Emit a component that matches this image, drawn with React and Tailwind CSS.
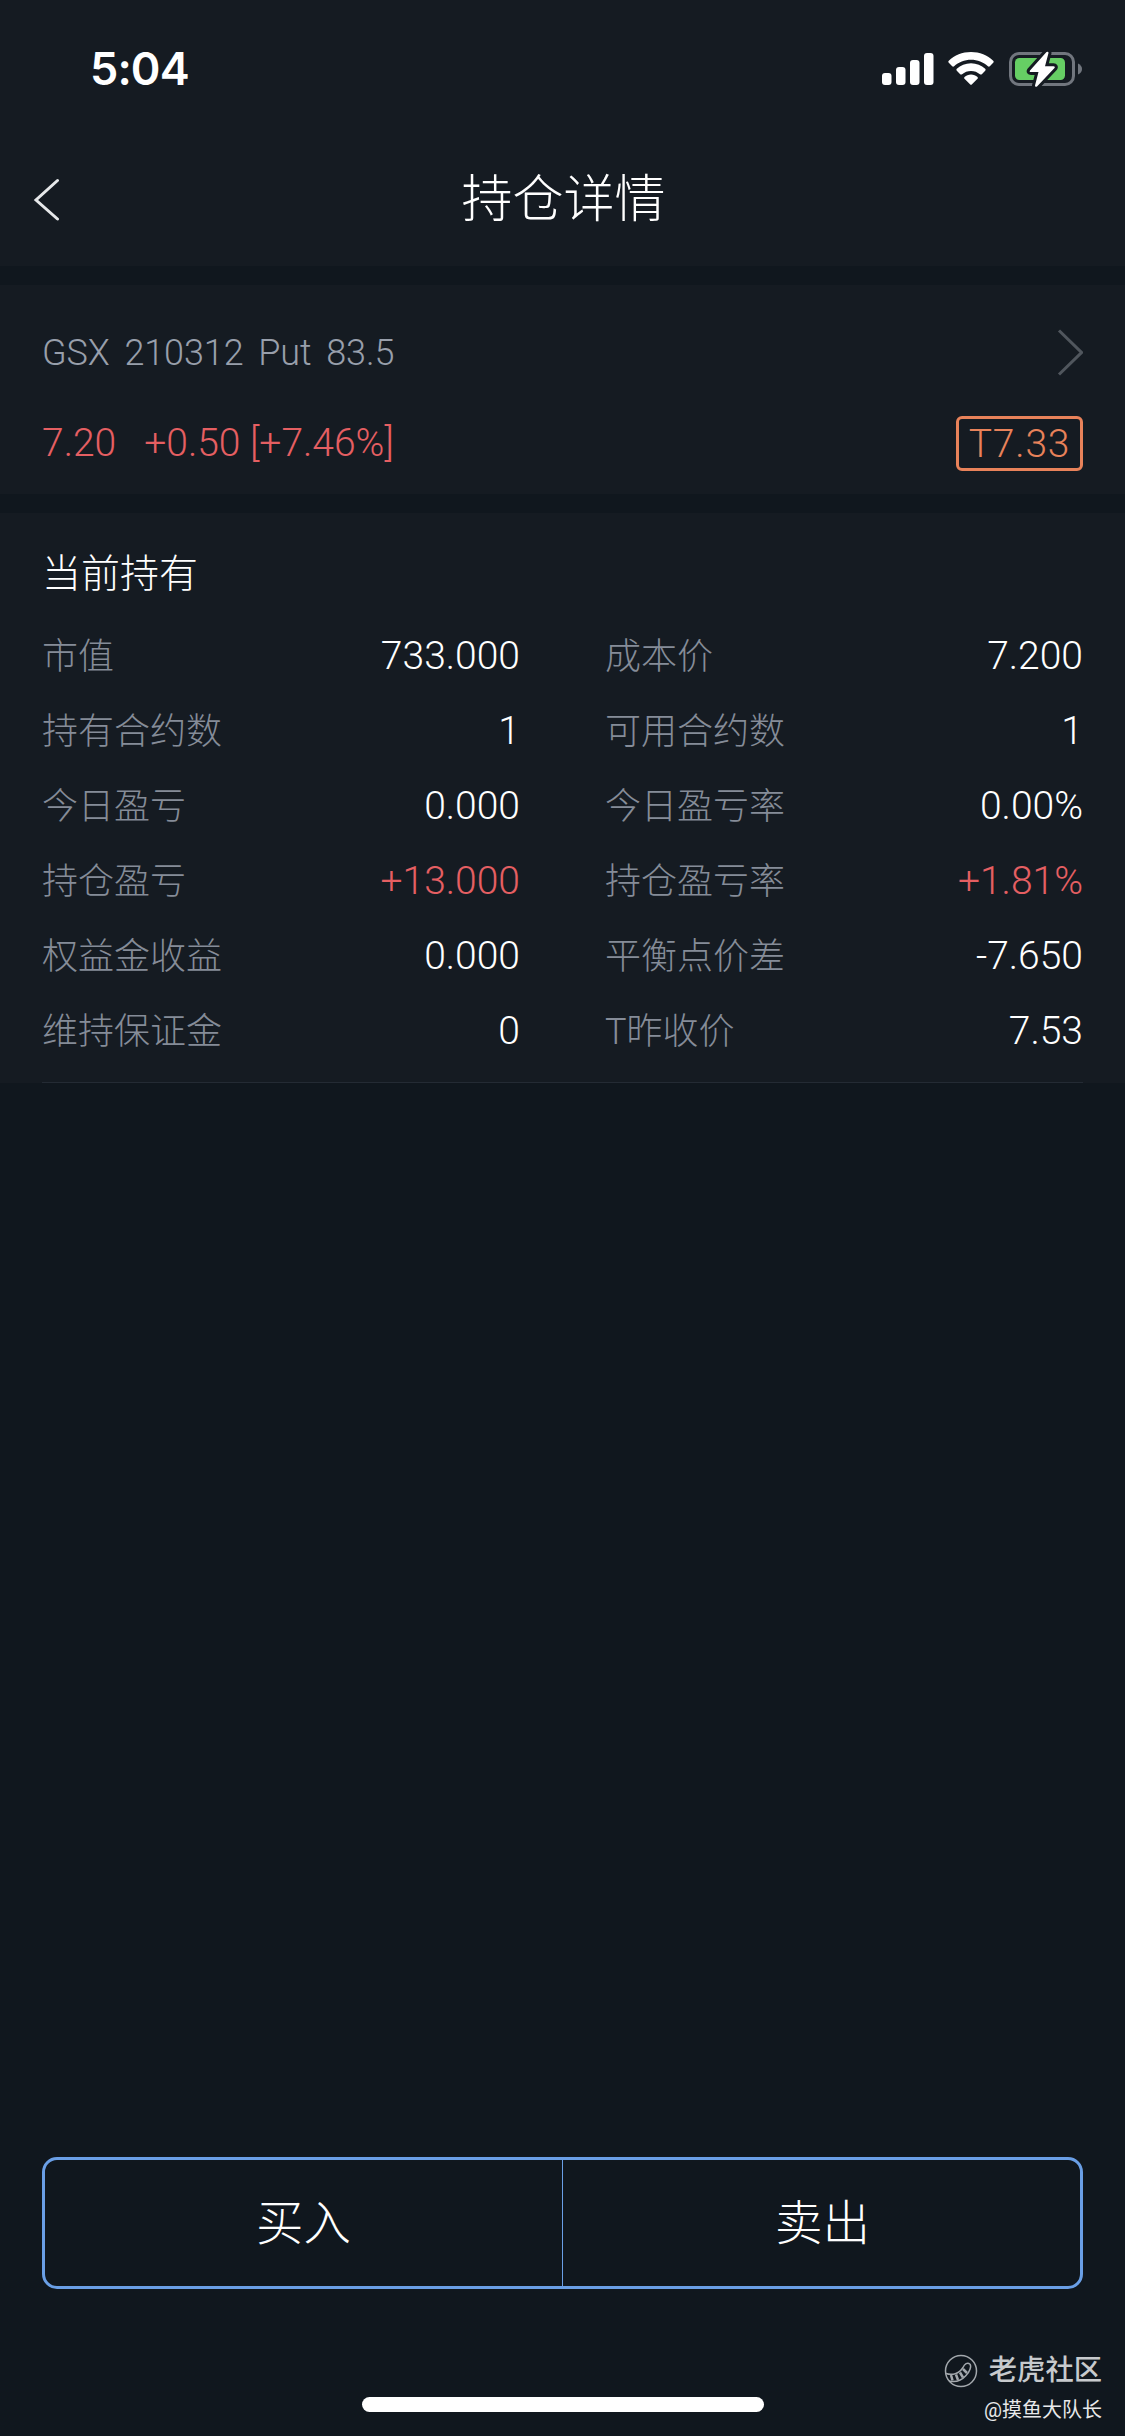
import React from "react";

const leftRows = [
  { label: "市值", value: "733.000" },
  { label: "持有合约数", value: "1" },
  { label: "今日盈亏", value: "0.000" },
  { label: "持仓盈亏", value: "+13.000", up: true },
  { label: "权益金收益", value: "0.000" },
  { label: "维持保证金", value: "0" },
];

const rightRows = [
  { label: "成本价", value: "7.200" },
  { label: "可用合约数", value: "1" },
  { label: "今日盈亏率", value: "0.00%" },
  { label: "持仓盈亏率", value: "+1.81%", up: true },
  { label: "平衡点价差", value: "-7.650" },
  { label: "T昨收价", value: "7.53" },
];

const StatusBar = () => (
  <div className="flex h-[132px] items-start justify-between pl-[90px] pr-[42px] pt-[42px]">
    <span className="font-['Inter',sans-serif] text-[45px] leading-[54px] font-semibold tracking-[-0.9px] text-white">
      5:04
    </span>
    <div className="flex items-center pt-[8px]">
      <svg width="52" height="38" viewBox="0 0 52 38" fill="#fff">
        <rect x="0" y="23" width="9.5" height="12" rx="3" />
        <rect x="14" y="17" width="9.5" height="18" rx="3" />
        <rect x="28" y="10" width="9.5" height="25" rx="3" />
        <rect x="42" y="3" width="9.5" height="32" rx="3" />
      </svg>
      <svg className="ml-[14px] mr-[15px]" width="46" height="38" viewBox="0 0 46 38" fill="#fff">
        <path d="M23 2C14.300 2 6.500 5.300.8 10.800Q-.2 11.800.8 12.800L4.200 16.200Q5.100 17.100 6.100 16.200C10.500 12.200 16.500 9.700 23 9.700S35.500 12.200 39.900 16.200Q40.900 17.100 41.800 16.200L45.200 12.800Q46.200 11.800 45.200 10.800C39.500 5.300 31.700 2 23 2Z" />
        <path d="M23 13.200C17.500 13.200 12.500 15.300 8.800 18.800Q7.800 19.800 8.800 20.800L12.200 24.200Q13.100 25 14.100 24.200C16.500 22.100 19.600 20.900 23 20.900S29.500 22.100 31.900 24.200Q32.900 25 33.800 24.200L37.200 20.800Q38.200 19.800 37.200 18.800C33.500 15.300 28.500 13.200 23 13.200Z" />
        <path d="M23 24.500C20.500 24.500 18.200 25.400 16.500 26.900Q15.600 27.800 16.500 28.700L22 34.200Q23 35.200 24 34.200L29.500 28.700Q30.400 27.800 29.500 26.900C27.800 25.400 25.500 24.500 23 24.500Z" />
      </svg>
      <svg width="74" height="38" viewBox="0 0 74 38">
        <rect x="1.500" y="3.500" width="63" height="31" rx="8.500" fill="none" stroke="#71767e" strokeWidth="3" />
        <path d="M69 13.500Q73 15.500 73 19T69 24.500Z" fill="#71767e" />
        <rect x="6" y="8" width="50" height="22" rx="4.500" fill="#66ce64" />
        <path
          d="M37.500 2L21 20.500Q20 22 22 22H29.500L26 35.500Q26 37.500 28 36.500L45.500 18Q46.500 16.300 44.500 16.300H36L39.500 3Q39.500 1 37.500 2Z"
          fill="#fff"
          stroke="#151b22"
          strokeWidth="6"
          paintOrder="stroke"
          strokeLinejoin="round"
        />
      </svg>
    </div>
  </div>
);

const Header = () => (
  <div className="flex h-[134px] items-center justify-between px-[33px]">
    <svg width="28" height="44" viewBox="0 0 28 44" fill="none" stroke="#e6e8ea" strokeWidth="3" strokeLinecap="round">
      <path d="M24.500 3.500L3 23L24.500 42" />
    </svg>
    <h1 className="pt-[2px] pl-[2px] text-[51px] leading-[60px] text-white">持仓详情</h1>
    <div className="w-[28px]" />
  </div>
);

const Quote = () => (
  <div className="h-[209px] bg-[#151b22] px-[42px] pt-[44px]">
    <div className="flex h-[47px] items-center justify-between">
      <span className="pt-[2px] text-[36px] leading-[47px] tracking-[-0.1px] text-[#989fab] [word-spacing:6px]">
        GSX 210312 Put 83.5
      </span>
      <svg width="26" height="47" viewBox="0 0 26 47" fill="none" stroke="#50565d" strokeWidth="3">
        <path d="M2 1.500L24.500 23.500L2 45.500" />
      </svg>
    </div>
    <div className="mt-[40px] flex h-[55px] items-center justify-between">
      <div className="flex text-[39px] leading-[47px] text-[#e55f62]">
        <span>7.20</span>
        <span className="ml-[28px]">+0.50 [+7.46%]</span>
      </div>
      <span className="flex h-[55px] w-[127px] items-center justify-center rounded-[6px] border-[3px] border-[#e8825a] pt-[2px] text-[39px] tracking-[0.8px] text-[#e8825a]">
        T7.33
      </span>
    </div>
  </div>
);

const Column = ({ rows }) => (
  <div className="flex w-[478px] flex-col">
    {rows.map(({ label, value, up }) => (
      <div key={label} className="flex h-[75px] items-center justify-between">
        <span className="text-[36px] text-[#858c98]">{label}</span>
        <span className={up ? "text-[39px] text-[#e55f62]" : "text-[39px] text-white"}>
          {value}
        </span>
      </div>
    ))}
  </div>
);

const Holdings = () => (
  <div className="h-[570px] bg-[#151b22] px-[42px] pt-[31px]">
    <h2 className="text-[39px] leading-[60px] text-white">当前持有</h2>
    <div className="mt-[15px] flex h-[463px] justify-between">
      <Column rows={leftRows} />
      <Column rows={rightRows} />
    </div>
    <div className="h-px bg-[#242b34]" />
  </div>
);

const Watermark = () => (
  <div className="absolute right-[23px] bottom-[11px] flex flex-col items-end">
    <div className="flex items-center gap-[11px]">
      <svg width="34" height="34" viewBox="0 0 34 34" fill="none" stroke="#a3a8ad" strokeWidth="1.500">
        <circle cx="17" cy="17" r="15.500" />
        <path d="M2 19.500C8 21.500 15 20 19 13.500C20.500 10 23.500 8 25.800 10C28 12 25.500 18 22 21.500C17.500 26.500 11 28.500 5 27" />
        <path d="M7 21L8.500 26.500M12 20.500L14 26M16 18.500L19 23.500M19 15L23 19" strokeWidth="2.500" />
      </svg>
      <span className="text-[28.3px] leading-[40px] font-medium text-[#c7cacd]">老虎社区</span>
    </div>
    <span className="mt-[4px] text-[20px] leading-[30px] font-normal text-[#e8e9ea]">@摸鱼大队长</span>
  </div>
);

const App = () => {
  return (
    <div
      lang="zh-CN"
      className="relative flex h-[2436px] w-[1125px] flex-col overflow-hidden bg-[#10171e] font-['Roboto','Noto_Sans_CJK_SC',sans-serif] font-light"
    >
      <div className="bg-[#151b22]">
        <StatusBar />
        <Header />
      </div>
      <div className="mt-[19px]">
        <Quote />
      </div>
      <div className="mt-[19px]">
        <Holdings />
      </div>

      <div className="mx-[42px] mt-auto flex h-[132px] rounded-[15px] border-[3px] border-[#6a9fe6] text-[47.5px] text-white">
        <button className="w-[518px] border-r border-[#6a9fe6] pt-[4px]">买入</button>
        <button className="flex-1 pt-[4px] pl-[2px]">卖出</button>
      </div>
      <div className="mx-auto mt-[108px] mb-[24px] h-[15px] w-[402px] shrink-0 rounded-full bg-white" />

      <Watermark />
    </div>
  );
};

export default App;
